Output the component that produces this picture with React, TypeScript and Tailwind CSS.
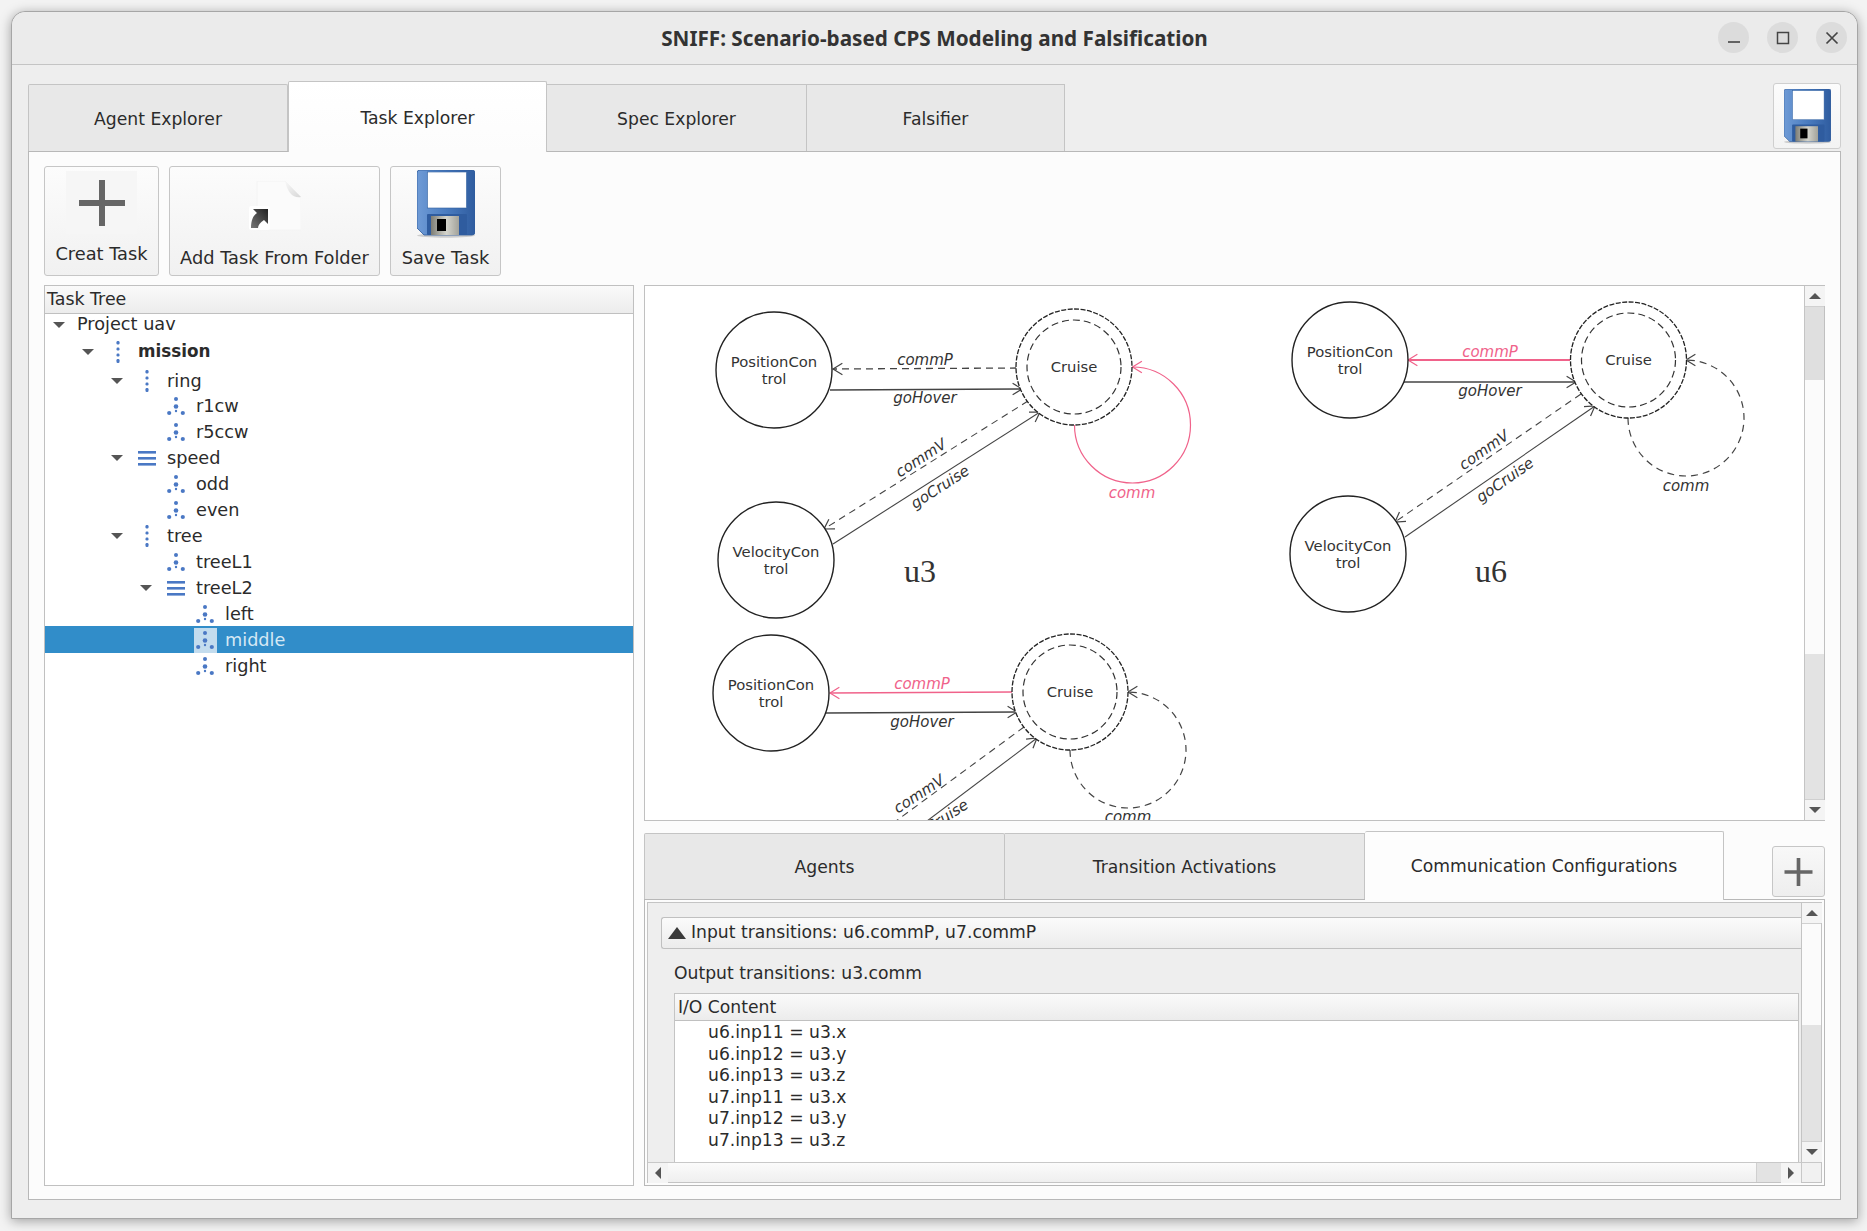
const UI = "font-['DejaVu_Sans',sans-serif]";

type Pt = { x: number; y: number };

function Head({ x, y, angle, color }: Pt & { angle: number; color: string }) {
  const len = 11;
  const a1 = angle + Math.PI - 0.55;
  const a2 = angle + Math.PI + 0.55;
  return (
    <path
      d={`M${x + len * Math.cos(a1)} ${y + len * Math.sin(a1)} L${x} ${y} L${x + len * Math.cos(a2)} ${y + len * Math.sin(a2)}`}
      fill="none"
      stroke={color}
      strokeWidth={1.2}
    />
  );
}

function Edge({ from, to, color = "#444", dashed, width = 1.3, head = true }: { from: Pt; to: Pt; color?: string; dashed?: boolean; width?: number; head?: boolean }) {
  const angle = Math.atan2(to.y - from.y, to.x - from.x);
  return (
    <g>
      <line x1={from.x} y1={from.y} x2={to.x} y2={to.y} stroke={color} strokeWidth={width} strokeDasharray={dashed ? "7 5" : undefined} />
      {head && <Head x={to.x} y={to.y} angle={angle} color={color} />}
    </g>
  );
}

function Label({ x, y, text, color = "#333", rotate }: Pt & { text: string; color?: string; rotate?: number }) {
  return (
    <text
      x={x}
      y={y + 5}
      textAnchor="middle"
      fontFamily="'DejaVu Sans', sans-serif"
      fontStyle="italic"
      fontSize={15}
      fill={color}
      transform={rotate ? `rotate(${rotate} ${x} ${y})` : undefined}
    >
      {text}
    </text>
  );
}

function Node({ x, y, lines }: Pt & { lines: string[] }) {
  return (
    <g>
      <circle cx={x} cy={y} r={58} fill="white" stroke="#222" strokeWidth={1.4} />
      <text x={x} y={y - 3.5} textAnchor="middle" fontFamily="'DejaVu Sans', sans-serif" fontSize={14.8} fill="#333">
        {lines[0]}
      </text>
      <text x={x} y={y + 13.5} textAnchor="middle" fontFamily="'DejaVu Sans', sans-serif" fontSize={14.8} fill="#333">
        {lines[1]}
      </text>
    </g>
  );
}

function Cruise({ x, y }: Pt) {
  return (
    <g>
      <circle cx={x} cy={y} r={58} fill="white" stroke="#222" strokeWidth={1.3} strokeDasharray="5 1.5" />
      <circle cx={x} cy={y} r={47} fill="none" stroke="#333" strokeWidth={1.2} strokeDasharray="7 4" />
      <text x={x} y={y + 5} textAnchor="middle" fontFamily="'DejaVu Sans', sans-serif" fontSize={14.8} fill="#333">
        Cruise
      </text>
    </g>
  );
}

const RED = "#f0628a";

function Loop({ x, y, red }: Pt & { red?: boolean }) {
  const color = red ? RED : "#444";
  return (
    <g>
      <path
        d={`M${x - 58} ${y} A58 58 0 1 0 ${x} ${y - 58}`}
        fill="none"
        stroke={color}
        strokeWidth={1.2}
        strokeDasharray={red ? undefined : "7 5"}
      />
      <Head x={x} y={y - 58} angle={Math.PI} color={color} />
    </g>
  );
}

function Graph() {
  return (
    <svg className="block w-[1159px] h-[534px] shrink-0" viewBox="645 285 1159 534">
      {/* u3 */}
      <Edge from={{ x: 1017, y: 367 }} to={{ x: 833, y: 368 }} dashed />
      <Edge from={{ x: 830, y: 389 }} to={{ x: 1022, y: 388 }} width={1.6} />
      <Edge from={{ x: 1028, y: 400 }} to={{ x: 824, y: 528 }} dashed width={1.1} />
      <Edge from={{ x: 833, y: 543 }} to={{ x: 1040, y: 411 }} width={1.1} />
      <Loop x={1132.5} y={424} red />
      <Node x={774} y={369} lines={["PositionCon", "trol"]} />
      <Node x={776} y={559} lines={["VelocityCon", "trol"]} />
      <Cruise x={1074} y={366} />
      <Label x={925} y={359} text="commP" />
      <Label x={925} y={397} text="goHover" />
      <Label x={921} y={457} text="commV" rotate={-33} />
      <Label x={940} y={486} text="goCruise" rotate={-33} />
      <Label x={1132} y={492} text="comm" color={RED} />
      <text x={920} y={581} textAnchor="middle" fontFamily="'Liberation Serif', serif" fontSize={32} fill="#333">
        u3
      </text>

      {/* u6 */}
      <Edge from={{ x: 1570, y: 359 }} to={{ x: 1408, y: 359 }} color={RED} width={2} />
      <Edge from={{ x: 1404, y: 381 }} to={{ x: 1576, y: 381 }} />
      <Edge from={{ x: 1581, y: 393 }} to={{ x: 1395, y: 521 }} dashed width={1.1} />
      <Edge from={{ x: 1405, y: 536 }} to={{ x: 1595, y: 405 }} width={1.1} />
      <Loop x={1686} y={417} />
      <Node x={1350} y={359} lines={["PositionCon", "trol"]} />
      <Node x={1348} y={553} lines={["VelocityCon", "trol"]} />
      <Cruise x={1628.5} y={359} />
      <Label x={1490} y={351} text="commP" color={RED} />
      <Label x={1490} y={390} text="goHover" />
      <Label x={1484} y={449} text="commV" rotate={-35} />
      <Label x={1505} y={479} text="goCruise" rotate={-35} />
      <Label x={1686} y={485} text="comm" />
      <text x={1491} y={581} textAnchor="middle" fontFamily="'Liberation Serif', serif" fontSize={32} fill="#333">
        u6
      </text>

      {/* third one runs off the bottom of the view */}
      <Edge from={{ x: 1012, y: 691 }} to={{ x: 830, y: 692 }} color={RED} width={1.6} />
      <Edge from={{ x: 826, y: 712 }} to={{ x: 1017, y: 711 }} width={1.6} />
      <Edge from={{ x: 1024, y: 726 }} to={{ x: 896, y: 820 }} dashed width={1.1} head={false} />
      <Edge from={{ x: 927, y: 820 }} to={{ x: 1037, y: 737 }} width={1.1} />
      <Loop x={1128} y={749} />
      <Node x={771} y={692} lines={["PositionCon", "trol"]} />
      <Cruise x={1070} y={691} />
      <Label x={922} y={683} text="commP" color={RED} />
      <Label x={922} y={721} text="goHover" />
      <Label x={919} y={793} text="commV" rotate={-33} />
      <Label x={939} y={820} text="goCruise" rotate={-33} />
      <Label x={1128} y={816} text="comm" />
    </svg>
  );
}

function Floppy({ className }: { className: string }) {
  return (
    <svg className={className} viewBox="0 0 58 68">
      <defs>
        <linearGradient id="fl-body" x1="0" y1="0" x2="1" y2="0">
          <stop offset="0" stopColor="#6f9bd6" />
          <stop offset="0.5" stopColor="#4a7cc0" />
          <stop offset="1" stopColor="#2f5c9f" />
        </linearGradient>
        <linearGradient id="fl-shutter" x1="0" y1="0" x2="1" y2="0">
          <stop offset="0" stopColor="#7d7d75" />
          <stop offset="0.55" stopColor="#d4d4cc" />
          <stop offset="1" stopColor="#a2a29a" />
        </linearGradient>
      </defs>
      <ellipse cx="29" cy="65.5" rx="29" ry="2.2" fill="#000" opacity="0.16" />
      <path d="M3 0 H55 Q58 0 58 3 V62 Q58 65 55 65 H7 L0 58 V3 Q0 0 3 0 Z" fill="url(#fl-body)" stroke="#2d5a9c" strokeWidth="0.8" />
      <rect x="10.5" y="2" width="39" height="36" fill="#fff" stroke="#2f5f9f" strokeWidth="0.6" />
      <rect x="10" y="44" width="40" height="21" rx="1" fill="#2f5c9f" />
      <rect x="14" y="46" width="28" height="19" fill="url(#fl-shutter)" />
      <rect x="20" y="49" width="9" height="12" fill="#000" />
    </svg>
  );
}

function PlusIcon({ className }: { className: string }) {
  return (
    <svg className={className} viewBox="0 0 46 46">
      <path d="M20 0 H26 V20 H46 V26 H26 V46 H20 V26 H0 V20 H20 Z" fill="#666" />
    </svg>
  );
}

function AddDocIcon() {
  return (
    <svg className="w-[52px] h-[50px] mb-[13px]" viewBox="0 0 52 50">
      <defs>
        <linearGradient id="fold" x1="0" y1="0" x2="1" y2="1">
          <stop offset="0" stopColor="#f8f8f8" />
          <stop offset="1" stopColor="#d8d8d8" />
        </linearGradient>
        <linearGradient id="link-arrow" x1="0" y1="1" x2="1" y2="0">
          <stop offset="0" stopColor="#777" />
          <stop offset="1" stopColor="#222" />
        </linearGradient>
      </defs>
      <path d="M8 0 H36 L52 16 V49 H8 Z" fill="#fbfbfb" stroke="#f4f4f4" />
      <path d="M36 0 L52 16 Q40 18 36 0 Z" fill="url(#fold)" />
      <rect x="0" y="25" width="21" height="24" rx="2" fill="#fff" />
      <path d="M2 47 C2 38 5 34 8 32 L4 28 H19 V43 L15 39 C11 42 9 44 9 47 Z" fill="url(#link-arrow)" />
    </svg>
  );
}

function Caret({ dir, className = "" }: { dir: "up" | "down" | "left" | "right"; className?: string }) {
  const pts = { up: "0,7 6,1 12,7", down: "0,1 12,1 6,7", left: "8,0 8,12 2,6", right: "2,0 2,12 8,6" }[dir];
  const size = dir === "up" || dir === "down" ? "w-[12px] h-[8px]" : "w-[10px] h-[12px]";
  const box = dir === "up" || dir === "down" ? "0 0 12 8" : "0 0 10 12";
  return (
    <svg className={`${size} ${className}`} viewBox={box}>
      <polygon points={pts} fill="#555" />
    </svg>
  );
}

function ScrollBtn({ dir }: { dir: "up" | "down" | "left" | "right" }) {
  return (
    <div className="w-[20px] h-[20px] shrink-0 flex items-center justify-center bg-[#f4f4f4]">
      <Caret dir={dir} />
    </div>
  );
}

function VScroll({ before, thumb, after }: { before: string; thumb: string; after: string }) {
  return (
    <div className="w-[20px] shrink-0 flex flex-col border-l border-[#c4c4c4]">
      <ScrollBtn dir="up" />
      <div className={`${before} bg-[#dfdfdf] border-t border-[#d0d0d0]`} />
      <div className={`${thumb} bg-[#fbfbfb]`} />
      <div className={`${after} bg-[#e3e3e3] border-b border-[#d0d0d0]`} />
      <ScrollBtn dir="down" />
    </div>
  );
}

function LeafIcon() {
  return (
    <svg className="w-[18px] h-[19px]" viewBox="0 0 18 19" fill="#4a78c4">
      <circle cx="9" cy="2" r="2" />
      <circle cx="9" cy="9.5" r="2.3" />
      <circle cx="9" cy="14" r="1.2" />
      <circle cx="2.2" cy="16" r="2.1" />
      <circle cx="15.8" cy="16" r="2.1" />
    </svg>
  );
}

function SeqIcon() {
  return (
    <svg className="w-[6px] h-[22px]" viewBox="0 0 6 22" fill="#4a78c4">
      <rect x="1.5" y="0" width="3" height="3.5" rx="1.2" />
      <rect x="1.5" y="6.5" width="3" height="3" rx="1.2" />
      <rect x="1.5" y="12.5" width="3" height="3" rx="1.2" />
      <rect x="1.5" y="18" width="3" height="4" rx="1.2" />
    </svg>
  );
}

function ParIcon() {
  return (
    <svg className="w-[18px] h-[15px]" viewBox="0 0 18 15" fill="#4a78c4">
      <rect x="0" y="0" width="18" height="2.6" />
      <rect x="0" y="6" width="18" height="2.6" />
      <rect x="0" y="12" width="18" height="2.6" />
    </svg>
  );
}

const treeRows = [
  { text: "Project uav", pad: "pl-[8px]", h: "h-[21px]", arrow: true, icon: "none" },
  { text: "mission", pad: "pl-[37px]", h: "h-[34px]", arrow: true, icon: "seq", bold: true },
  { text: "ring", pad: "pl-[66px]", h: "h-[24px]", arrow: true, icon: "seq" },
  { text: "r1cw", pad: "pl-[95px]", h: "h-[26px]", icon: "leaf" },
  { text: "r5ccw", pad: "pl-[95px]", h: "h-[26px]", icon: "leaf" },
  { text: "speed", pad: "pl-[66px]", h: "h-[26px]", arrow: true, icon: "par" },
  { text: "odd", pad: "pl-[95px]", h: "h-[26px]", icon: "leaf" },
  { text: "even", pad: "pl-[95px]", h: "h-[26px]", icon: "leaf" },
  { text: "tree", pad: "pl-[66px]", h: "h-[26px]", arrow: true, icon: "seq" },
  { text: "treeL1", pad: "pl-[95px]", h: "h-[26px]", icon: "leaf" },
  { text: "treeL2", pad: "pl-[95px]", h: "h-[26px]", arrow: true, icon: "par" },
  { text: "left", pad: "pl-[124px] pt-[1px]", h: "h-[25px]", icon: "leaf" },
  { text: "middle", pad: "pl-[124px] pt-[1px]", h: "h-[27px]", icon: "leaf", selected: true },
  { text: "right", pad: "pl-[124px]", h: "h-[26px]", icon: "leaf" },
];

function TreeRow({ row }: { row: (typeof treeRows)[number] }) {
  return (
    <div className={`flex items-center ${row.pad} ${row.h} ${row.selected ? "bg-[#318dc9] text-[#d5e8f4]" : "text-[#2b2b2b]"}`}>
      <div className="w-[12px] shrink-0 flex justify-center">{row.arrow && <Caret dir="down" />}</div>
      {row.icon === "none" ? (
        <div className="w-[12px] shrink-0" />
      ) : (
        <div className="w-[44px] pl-[4px] shrink-0 flex items-center justify-center">
          <div className={`w-[23px] h-[25px] flex items-center justify-center ${row.selected ? "bg-[#c3dcee]" : ""}`}>
            {row.icon === "leaf" && <LeafIcon />}
            {row.icon === "seq" && <SeqIcon />}
            {row.icon === "par" && <ParIcon />}
          </div>
        </div>
      )}
      <span className={row.bold ? "font-bold text-[16.8px]" : ""}>{row.text}</span>
    </div>
  );
}

function ToolButton({ w, label, children, pad }: { w: string; label: string; children: React.ReactNode; pad: string }) {
  return (
    <div className={`${w} h-[110px] flex flex-col items-center rounded-[3px] border border-[#c6c6c6] bg-gradient-to-b from-[#fcfcfc] to-[#f1f1f1] ${pad}`}>
      <div className="flex-1 flex items-center justify-center">{children}</div>
      <span className="text-[17.8px] text-[#2b2b2b] whitespace-nowrap">{label}</span>
    </div>
  );
}

const ioRows = ["u6.inp11 = u3.x", "u6.inp12 = u3.y", "u6.inp13 = u3.z", "u7.inp11 = u3.x", "u7.inp12 = u3.y", "u7.inp13 = u3.z"];

export default function App() {
  return (
    <div className={`w-[1867px] h-[1231px] overflow-hidden bg-[#f3f3f3] pl-[11px] pt-[11px] ${UI}`}>
      <div className="w-[1847px] h-[1208px] flex flex-col rounded-t-[14px] border border-[#a6a6a6] bg-[#eeeeee] shadow-[0_2px_12px_rgba(0,0,0,0.35)]">
        {/* title bar */}
        <div className="h-[53px] shrink-0 relative flex items-center justify-center border-b border-[#c4c4c4] bg-[#ebebeb] rounded-t-[14px]">
          <span className="pt-[1px] font-['Noto_Sans',sans-serif] font-bold text-[20.7px] text-[#333]">SNIFF: Scenario-based CPS Modeling and Falsification</span>
          <div className="absolute right-[10px] top-[10px] flex gap-[18px]">
            <div className="w-[31px] h-[31px] rounded-full bg-[#dcdcdc] flex items-center justify-center">
              <svg className="w-[14px] h-[14px]" viewBox="0 0 14 14"><path d="M1 11 H13" stroke="#444" strokeWidth="1.6" /></svg>
            </div>
            <div className="w-[31px] h-[31px] rounded-full bg-[#dcdcdc] flex items-center justify-center">
              <svg className="w-[14px] h-[14px]" viewBox="0 0 14 14"><rect x="1.5" y="1.5" width="11" height="11" fill="none" stroke="#444" strokeWidth="1.5" /></svg>
            </div>
            <div className="w-[31px] h-[31px] rounded-full bg-[#dcdcdc] flex items-center justify-center">
              <svg className="w-[14px] h-[14px]" viewBox="0 0 14 14"><path d="M1.5 1.5 L12.5 12.5 M12.5 1.5 L1.5 12.5" stroke="#444" strokeWidth="1.7" /></svg>
            </div>
          </div>
        </div>

        <div className="flex-1 flex flex-col px-[16px] pb-[18px] min-h-0">
          {/* main tabs */}
          <div className="h-[86px] shrink-0 flex items-end">
            <div className="w-[260px] h-[67px] pt-[3px] flex items-center justify-center rounded-t-[2px] border border-b-0 border-[#c4c4c4] bg-[#e8e8e8] text-[17.2px] text-[#2b2b2b]">Agent Explorer</div>
            <div className="relative z-10 w-[259px] h-[71px] pt-[3px] -mb-[1px] flex items-center justify-center rounded-t-[2px] border border-b-0 border-[#c4c4c4] bg-gradient-to-b from-white to-[#fcfcfc] text-[17.2px] text-[#2b2b2b]">Task Explorer</div>
            <div className="w-[260px] h-[67px] pt-[3px] flex items-center justify-center border border-b-0 border-l-0 border-[#c4c4c4] bg-[#e8e8e8] text-[17.2px] text-[#2b2b2b]">Spec Explorer</div>
            <div className="w-[258px] h-[67px] pt-[3px] flex items-center justify-center border border-b-0 border-l-0 border-[#c4c4c4] bg-[#e8e8e8] text-[17.2px] text-[#2b2b2b]">Falsifier</div>
            <div className="ml-auto w-[68px] h-[66px] mb-[2px] flex items-center justify-center rounded-[3px] border border-[#cfcfcf] bg-gradient-to-b from-[#fcfcfc] to-[#f3f3f3]">
              <Floppy className="w-[47px] h-[55px]" />
            </div>
          </div>

          {/* tab content */}
          <div className="flex-1 min-h-0 flex flex-col border border-[#b8b8b8] bg-[#fcfcfc] pl-[15px] pr-[15px] pt-[14px] pb-[13px]">
            <div className="flex gap-[10px] shrink-0 mb-[9px]">
              <ToolButton w="w-[115px]" label="Creat Task" pad="pb-[8px] pt-[4px]">
                <div className="w-[71px] h-[63px] mb-[7px] bg-[#f6f6f6] flex items-center justify-center">
                  <PlusIcon className="w-[46px] h-[46px]" />
                </div>
              </ToolButton>
              <ToolButton w="w-[211px]" label="Add Task From Folder" pad="pb-[3px] pt-[12px]">
                <AddDocIcon />
              </ToolButton>
              <ToolButton w="w-[111px]" label="Save Task" pad="pb-[3px]">
                <Floppy className="w-[58px] h-[68px] mb-[4px]" />
              </ToolButton>
            </div>

            <div className="flex-1 min-h-0 flex gap-[10px]">
              {/* task tree */}
              <div className="w-[590px] shrink-0 flex flex-col border border-[#c0c0c0] bg-white">
                <div className="h-[28px] shrink-0 flex items-center pl-[2px] border-b border-[#c0c0c0] bg-gradient-to-b from-[#fafafa] to-[#ececec] text-[17.4px] text-[#2b2b2b]">Task Tree</div>
                <div className="text-[17.7px]">
                  {treeRows.map((r) => (
                    <TreeRow key={r.text} row={r} />
                  ))}
                </div>
              </div>

              <div className="flex-1 min-w-0 flex flex-col">
                {/* diagram view */}
                <div className="h-[536px] shrink-0 flex border border-[#c0c0c0] bg-white">
                  <Graph />
                  <VScroll before="h-[74px]" thumb="h-[274px]" after="flex-1" />
                </div>

                {/* lower tabs */}
                <div className="h-[69px] mt-[9px] shrink-0 flex items-end">
                  <div className="w-[361px] h-[66px] pt-[3px] flex items-center justify-center rounded-t-[2px] border border-b-0 border-[#c4c4c4] bg-[#e8e8e8] text-[17.2px] text-[#2b2b2b]">Agents</div>
                  <div className="w-[360px] h-[66px] pt-[3px] flex items-center justify-center border border-b-0 border-l-0 border-[#c4c4c4] bg-[#e8e8e8] text-[17.2px] text-[#2b2b2b]">Transition Activations</div>
                  <div className="relative z-10 w-[359px] h-[69px] pt-[2px] -mb-[1px] flex items-center justify-center rounded-t-[2px] border border-b-0 border-l-0 border-[#c4c4c4] bg-[#fdfdfd] text-[17.2px] text-[#2b2b2b]">Communication Configurations</div>
                  <div className="ml-auto w-[53px] h-[51px] mb-[2px] flex items-center justify-center rounded-[3px] border border-[#c6c6c6] bg-gradient-to-b from-[#f8f8f8] to-[#eeeeee]">
                    <PlusIcon className="w-[29px] h-[28px]" />
                  </div>
                </div>

                {/* lower pane */}
                <div className="flex-1 min-h-0 border border-[#b8b8b8] bg-[#fcfcfc] p-[2px]">
                  <div className="h-full flex flex-col border border-[#c4c4c4]">
                    <div className="flex-1 min-h-0 flex">
                      <div className="flex-1 min-w-0 flex flex-col bg-[#eeeeee] pt-[14px] pl-[13px]">
                        <div className="h-[32px] shrink-0 flex items-center pl-[6px] gap-[5px] rounded-l-[3px] border border-r-0 border-[#c0c0c0] bg-gradient-to-b from-[#fbfbfb] to-[#ececec] text-[17.2px] text-[#2b2b2b]">
                          <svg className="w-[18px] h-[12px]" viewBox="0 0 18 12"><polygon points="0,12 9,0 18,12" fill="#3a3a3a" /></svg>
                          Input transitions: u6.commP, u7.commP
                        </div>
                        <div className="h-[44px] pt-[6px] shrink-0 flex items-center pl-[13px] text-[17.2px] text-[#2b2b2b]">Output transitions: u3.comm</div>
                        <div className="flex-1 min-h-0 ml-[13px] mr-[2px] flex flex-col border-x border-t border-[#c4c4c4] bg-white">
                          <div className="h-[27px] pt-[2px] shrink-0 flex items-center pl-[3px] border-b border-[#c0c0c0] bg-gradient-to-b from-[#fafafa] to-[#ececec] text-[17.2px] text-[#2b2b2b]">I/O Content</div>
                          <div className="pl-[33px] pt-[1px] text-[17.2px] leading-[21.6px] text-[#2b2b2b]">
                            {ioRows.map((t) => (
                              <div key={t}>{t}</div>
                            ))}
                          </div>
                        </div>
                      </div>
                      <VScroll before="h-0" thumb="h-[101px]" after="flex-1" />
                    </div>
                    <div className="h-[20px] shrink-0 flex border-t border-[#c8c8c8]">
                      <ScrollBtn dir="left" />
                      <div className="flex-1 bg-gradient-to-b from-[#fbfbfb] to-[#efefef]" />
                      <div className="w-[25px] bg-[#e3e3e3] border-l border-[#d0d0d0]" />
                      <ScrollBtn dir="right" />
                      <div className="w-[20px] border-l border-[#c8c8c8] bg-[#f1f1f1]" />
                    </div>
                  </div>
                </div>
              </div>
            </div>
          </div>
        </div>
      </div>
    </div>
  );
}
